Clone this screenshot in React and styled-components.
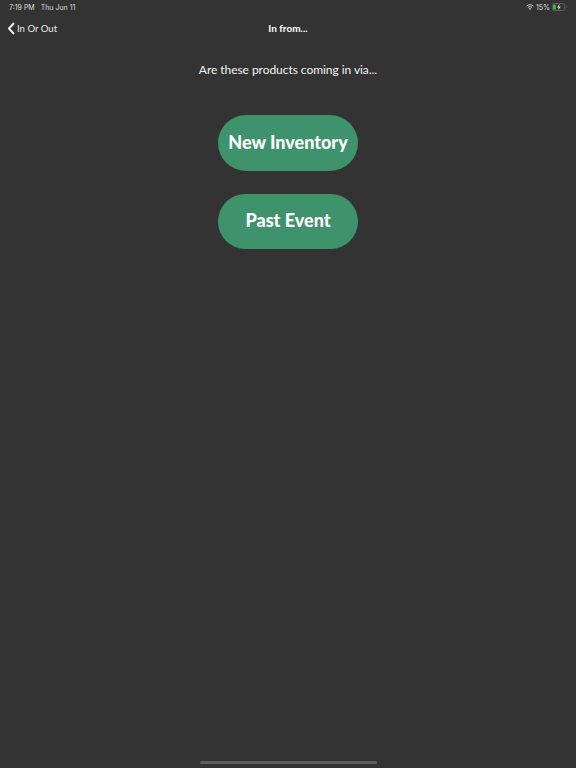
import React from 'react';
import styled, { createGlobalStyle } from 'styled-components';

const GlobalStyle = createGlobalStyle`
  html, body {
    margin: 0;
    padding: 0;
    background: #333333;
  }
`;

const Screen = styled.div`
  width: 576px;
  height: 768px;
  overflow: hidden;
  background: #333333;
  display: flex;
  flex-direction: column;
  color: #fff;
  font-family: Lato, 'Liberation Sans', sans-serif;
`;

const StatusBar = styled.div`
  height: 14px;
  padding: 0 9px;
  display: flex;
  align-items: center;
  justify-content: space-between;
  font-family: Inter, 'Liberation Sans', sans-serif;
  font-size: 7px;
  color: #dedede;
`;

const StatusGroup = styled.div`
  display: flex;
  align-items: center;
  gap: ${props => props.$gap || 6}px;
`;

const NavBar = styled.div`
  height: 28px;
  padding: 0 8px;
  display: grid;
  grid-template-columns: 1fr auto 1fr;
  align-items: center;
  font-family: Lato, 'Liberation Sans', sans-serif;
  font-size: 9.6px;
`;

const BackLink = styled.div`
  display: flex;
  align-items: center;
  gap: 2px;
  color: #e8e8e8;
`;

const NavTitle = styled.div`
  font-size: 10px;
  font-weight: 700;
  color: #fff;
`;

const Content = styled.div`
  flex: 1;
  display: flex;
  flex-direction: column;
  align-items: center;
  padding-top: 20px;
`;

const Prompt = styled.div`
  font-size: 12px;
  line-height: 16px;
  color: #f2f2f2;
  letter-spacing: -0.05px;
  margin-bottom: 37px;
`;

const ActionButton = styled.button`
  width: 140px;
  height: 55.6px;
  margin-bottom: 23px;
  border: 0;
  border-radius: 28px;
  background: #3e926c;
  color: #fff;
  font-family: Lato, 'Liberation Sans', sans-serif;
  font-weight: 900;
  font-size: 18px;
  line-height: 18px;
  padding: 0 0 2px;
`;

const HomeBar = styled.div`
  width: 177px;
  height: 3px;
  border-radius: 2px;
  margin: 0 auto 4px;
  background: #5d5d5d;
`;

const App = () => (
  <Screen>
    <GlobalStyle />
    <StatusBar>
      <StatusGroup>
        <span>7:19 PM</span>
        <span>Thu Jun 11</span>
      </StatusGroup>
      <StatusGroup $gap={2}>
        <svg width="8" height="6" viewBox="0 0 16 12">
          <path d="M1 4.5 C5 0.5 11 0.5 15 4.5" fill="none" stroke="#dedede" strokeWidth="1.8" />
          <path d="M3.8 7 C6.2 4.8 9.8 4.8 12.2 7" fill="none" stroke="#dedede" strokeWidth="1.8" />
          <path d="M8 12 L5.6 9.2 C7 8 9 8 10.4 9.2 Z" fill="#dedede" />
        </svg>
        <span>15%</span>
        <svg width="15" height="8" viewBox="0 0 30 16">
          <rect x="0.8" y="1" width="25" height="14" rx="4" fill="none" stroke="#6f6f6f" strokeWidth="1.4" />
          <rect x="2.5" y="2.8" width="5" height="10.4" rx="1" fill="#35c759" />
          <path d="M15 1.5 L10 9 H13.5 L12 14.5 L17.5 7 H14 Z" fill="#f0f0f0" />
          <path d="M27.5 5.5 C29.5 6 29.5 10 27.5 10.5 Z" fill="#6f6f6f" />
        </svg>
      </StatusGroup>
    </StatusBar>
    <NavBar>
      <BackLink>
        <svg width="7" height="13" viewBox="0 0 7 13">
          <path d="M6 1 L1 6.5 L6 12" fill="none" stroke="#e8e8e8" strokeWidth="2" />
        </svg>
        <span>In Or Out</span>
      </BackLink>
      <NavTitle>In from...</NavTitle>
    </NavBar>
    <Content>
      <Prompt>Are these products coming in via...</Prompt>
      <ActionButton>New Inventory</ActionButton>
      <ActionButton>Past Event</ActionButton>
    </Content>
    <HomeBar />
  </Screen>
);

export default App;
